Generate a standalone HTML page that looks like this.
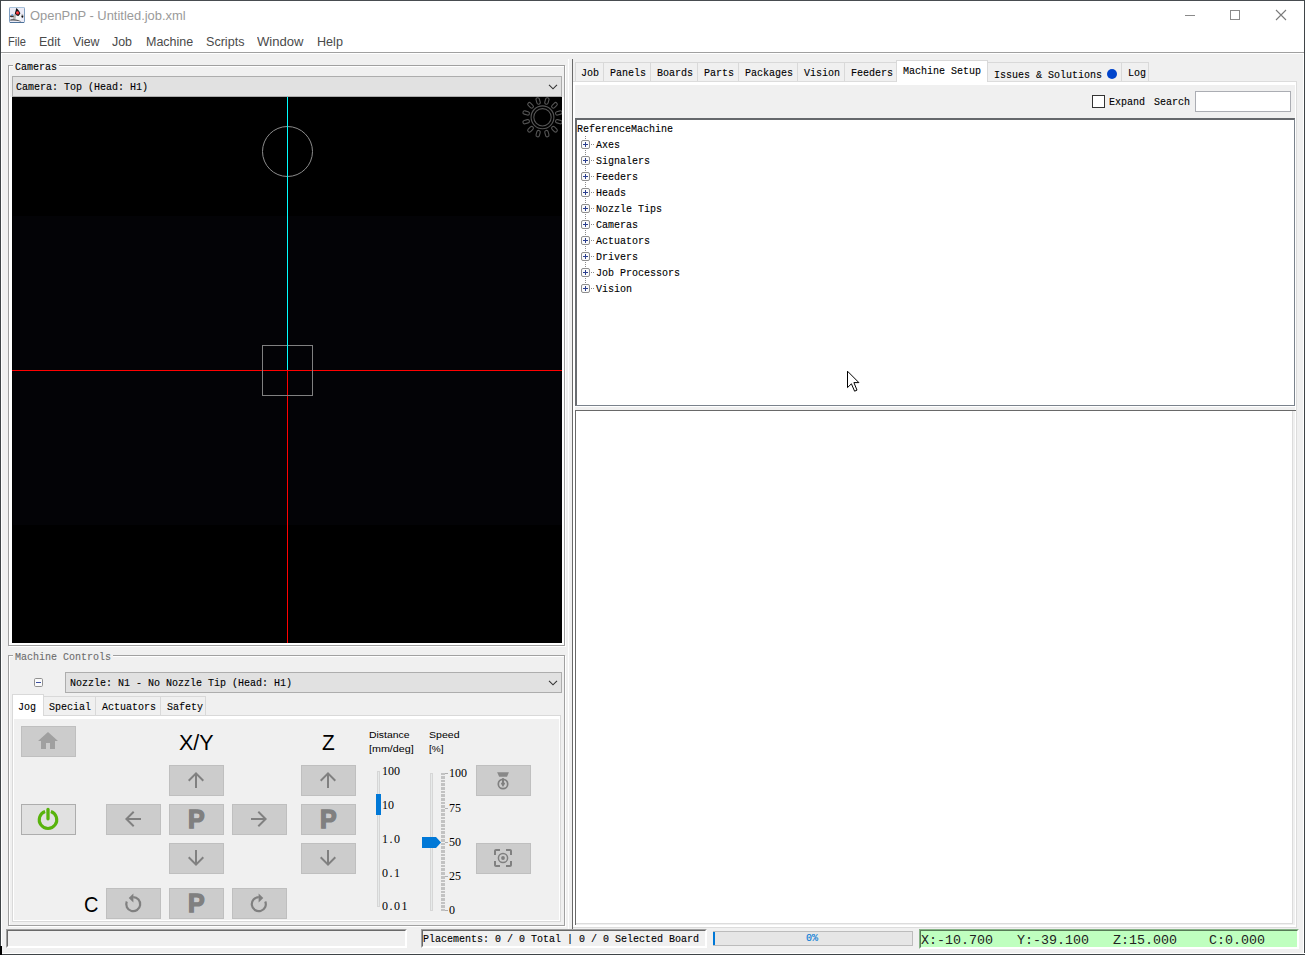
<!DOCTYPE html>
<html><head><meta charset="utf-8"><title>OpenPnP - Untitled.job.xml</title>
<style>
html,body{margin:0;padding:0;}
body{width:1305px;height:955px;overflow:hidden;background:#f0f0f0;position:relative;font-family:"Liberation Sans",sans-serif;}
#w{position:absolute;left:0;top:0;width:1305px;height:955px;overflow:hidden;background:#f0f0f0;}
#w div,#w span,#w svg{position:absolute;box-sizing:border-box;}
.m{font-family:"Liberation Mono",monospace;font-size:11px;line-height:12px;white-space:pre;transform:scaleX(0.9091);transform-origin:0 0;-webkit-text-stroke:0.12px;}
.n{font-family:"Liberation Serif",serif;font-size:12px;line-height:12px;white-space:pre;}
.s{font-family:"Liberation Sans",sans-serif;white-space:pre;}
.btn{background:#cccccc;border:1px solid #bfbfbf;}
.tab{border:1px solid #d9d9d9;background:#f0f0f0;}
.tabsel{border:1px solid #d9d9d9;border-bottom:none;background:#fff;}
.combo{background:#e1e1e1;border:1px solid #adadad;}
</style></head><body><div id="w">

<div style="left:0px;top:0px;width:1305px;height:1px;background:#474c50;"></div>
<div style="left:0px;top:1px;width:1305px;height:51px;background:#fff;"></div>
<div style="left:0px;top:52px;width:1305px;height:1px;background:#a0a0a0;"></div>
<div style="left:0px;top:53px;width:1305px;height:1px;background:#fff;"></div>
<div style="left:0px;top:0px;width:1px;height:955px;background:#3f4447;"></div>
<div style="left:1px;top:53px;width:1px;height:901px;background:#fff;"></div>
<div style="left:1303px;top:53px;width:1px;height:901px;background:#fff;"></div>
<div style="left:1304px;top:0px;width:1px;height:955px;background:#3f4447;"></div>
<div style="left:0px;top:953px;width:1305px;height:1px;background:#fff;"></div>
<div style="left:0px;top:954px;width:1305px;height:1px;background:#3f4447;"></div>
<div style="left:0px;top:946px;width:2px;height:9px;background:#000;"></div>
<svg style="left:9px;top:7px" width="16" height="16" viewBox="0 0 16 16">

<rect x="0.5" y="0.5" width="15" height="15" rx="0.8" fill="#ebebf6" stroke="#7e9ec0" stroke-width="1"/><path d="M1 0.5H15" stroke="#a9c3db" stroke-width="1"/><path d="M1 15.5H15" stroke="#4d7299" stroke-width="1"/>
<path d="M4.6 6.8C4.3 9 4 11 3.6 12.9L12.2 13.4C12 11 11.9 8.6 11.6 6.2L9.4 8.9Z" fill="#f6f6f6"/><path d="M4.6 6.8C4.3 9 4 11 3.6 12.9L6.5 13L7 8Z" fill="#b5b5b5"/>
<path d="M1.3 12.6C4 11.6 8 12.2 12.3 14.3L11.5 14.6C8 13.6 4.5 13.2 1.3 13.8Z" fill="#4a4a4a"/>
<path d="M7.3 1C8.8 2.4 10.4 4.2 11.4 6.2C10.9 7.3 10.3 8.2 9.4 9C8 8.8 6.7 7.8 5.8 6.4C6.5 4.4 7 2.6 7.3 1Z" fill="#10181a"/>
<circle cx="8.6" cy="5.9" r="1.7" fill="#ee2a32"/><circle cx="8.3" cy="5.3" r="0.8" fill="#ff5a5e"/>
<ellipse cx="2.9" cy="9.3" rx="2" ry="1" fill="#3f3428"/><circle cx="3.2" cy="7.9" r="0.9" fill="#5b9be0"/>
<ellipse cx="13.3" cy="8.2" rx="1" ry="1.3" fill="#b8b8bc"/><ellipse cx="13.4" cy="9.6" rx="0.9" ry="1.2" fill="#0c0c0c"/>
</svg>
<span class="s" style="left:30.30px;top:9.82px;font-size:12.5px;line-height:12.5px;color:#9a9a9a;transform:scaleX(1.0341);transform-origin:0 0;">OpenPnP - Untitled.job.xml</span>
<svg style="left:1180px;top:5px" width="120" height="20" viewBox="0 0 120 20">
<path d="M5 10.5H15" stroke="#8a8a8a" stroke-width="1" fill="none"/>
<rect x="50.5" y="5.5" width="9" height="9" stroke="#8a8a8a" stroke-width="1" fill="none"/>
<path d="M96 5L106 15M106 5L96 15" stroke="#7a7a7a" stroke-width="1.1" fill="none"/>
</svg>
<span class="s" style="left:7.60px;top:35.82px;font-size:12.5px;line-height:12.5px;color:#4a4a4a;transform:scaleX(0.8894);transform-origin:0 0;">File</span>
<span class="s" style="left:38.60px;top:35.82px;font-size:12.5px;line-height:12.5px;color:#4a4a4a;transform:scaleX(0.9925);transform-origin:0 0;">Edit</span>
<span class="s" style="left:73.10px;top:35.82px;font-size:12.5px;line-height:12.5px;color:#4a4a4a;transform:scaleX(0.9860);transform-origin:0 0;">View</span>
<span class="s" style="left:112.40px;top:35.82px;font-size:12.5px;line-height:12.5px;color:#4a4a4a;transform:scaleX(0.9938);transform-origin:0 0;">Job</span>
<span class="s" style="left:146.20px;top:35.82px;font-size:12.5px;line-height:12.5px;color:#4a4a4a;transform:scaleX(0.9989);transform-origin:0 0;">Machine</span>
<span class="s" style="left:206.10px;top:35.82px;font-size:12.5px;line-height:12.5px;color:#4a4a4a;transform:scaleX(1.0056);transform-origin:0 0;">Scripts</span>
<span class="s" style="left:257.20px;top:35.82px;font-size:12.5px;line-height:12.5px;color:#4a4a4a;transform:scaleX(1.0472);transform-origin:0 0;">Window</span>
<span class="s" style="left:316.50px;top:35.82px;font-size:12.5px;line-height:12.5px;color:#4a4a4a;transform:scaleX(1.0083);transform-origin:0 0;">Help</span>
<div style="left:9px;top:66px;width:557px;height:581px;border:1px solid #fff;"></div>
<div style="left:8px;top:65px;width:557px;height:581px;border:1px solid #a0a0a0;"></div>
<div style="left:13px;top:60px;width:46px;height:12px;background:#f0f0f0;"></div>
<span class="m" style="left:15px;top:61px;color:#000;">Cameras</span>
<div class="combo" style="left:12px;top:76px;width:550px;height:21px;"></div>
<span class="m" style="left:16px;top:81px;color:#000;">Camera: Top (Head: H1)</span>
<svg style="left:548px;top:84px" width="10" height="6" viewBox="0 0 10 6"><path d="M1 0.8L5 4.8L9 0.8" stroke="#333" stroke-width="1.1" fill="none"/></svg>
<div style="left:10px;top:97px;width:554px;height:548px;background:#fff;"></div>
<div style="left:12px;top:97px;width:550px;height:546px;background:#000;"></div>
<div style="left:13px;top:216px;width:549px;height:309px;background:#030306;"></div>
<div style="left:287px;top:97px;width:1px;height:273px;background:#00ffff;"></div>
<div style="left:287px;top:370px;width:1px;height:273px;background:#ff0000;"></div>
<div style="left:12px;top:370px;width:550px;height:1px;background:#ff0000;"></div>
<div style="left:262px;top:345px;width:51px;height:51px;border:1px solid #808080;"></div>
<div style="left:287px;top:345px;width:1px;height:25px;background:#00ffff;"></div>
<div style="left:262px;top:126px;width:51px;height:51px;border:1px solid #8c8c8c;border-radius:50%;"></div>
<div style="left:287px;top:126px;width:1px;height:51px;background:#00ffff;"></div>
<svg style="left:518px;top:97px" width="44" height="44" viewBox="-24.5 -20.3 44 44" overflow="hidden"><g fill="none" stroke="#555" stroke-width="1.1"><circle r="11.4"/><circle r="8.7"/><rect x="-1.7" y="-20.2" width="3.4" height="6.6" rx="1.7" transform="rotate(15)" /><rect x="-1.7" y="-20.2" width="3.4" height="6.6" rx="1.7" transform="rotate(45)" /><rect x="-1.7" y="-20.2" width="3.4" height="6.6" rx="1.7" transform="rotate(75)" /><rect x="-1.7" y="-20.2" width="3.4" height="6.6" rx="1.7" transform="rotate(105)" /><rect x="-1.7" y="-20.2" width="3.4" height="6.6" rx="1.7" transform="rotate(135)" /><rect x="-1.7" y="-20.2" width="3.4" height="6.6" rx="1.7" transform="rotate(165)" /><rect x="-1.7" y="-20.2" width="3.4" height="6.6" rx="1.7" transform="rotate(195)" /><rect x="-1.7" y="-20.2" width="3.4" height="6.6" rx="1.7" transform="rotate(225)" /><rect x="-1.7" y="-20.2" width="3.4" height="6.6" rx="1.7" transform="rotate(255)" /><rect x="-1.7" y="-20.2" width="3.4" height="6.6" rx="1.7" transform="rotate(285)" /><rect x="-1.7" y="-20.2" width="3.4" height="6.6" rx="1.7" transform="rotate(315)" /><rect x="-1.7" y="-20.2" width="3.4" height="6.6" rx="1.7" transform="rotate(345)" /></g></svg>
<div style="left:9px;top:656px;width:557px;height:271px;border:1px solid #fff;"></div>
<div style="left:8px;top:655px;width:557px;height:271px;border:1px solid #a0a0a0;"></div>
<div style="left:13px;top:650px;width:100px;height:12px;background:#f0f0f0;"></div>
<span class="m" style="left:15px;top:651px;color:#6d6d6d;">Machine Controls</span>
<svg style="left:34px;top:678px" width="9" height="9" viewBox="0 0 9 9"><rect x="0.5" y="0.5" width="8" height="8" rx="1.2" fill="#fbfbfb" stroke="#919191"/><path d="M2 4.5H7" stroke="#3c50a0" stroke-width="1"/></svg>
<div class="combo" style="left:65px;top:672px;width:497px;height:21px;"></div>
<span class="m" style="left:70px;top:677px;color:#000;">Nozzle: N1 - No Nozzle Tip (Head: H1)</span>
<svg style="left:548px;top:680px" width="10" height="6" viewBox="0 0 10 6"><path d="M1 0.8L5 4.8L9 0.8" stroke="#333" stroke-width="1.1" fill="none"/></svg>
<div class="tab" style="left:43px;top:696px;width:53px;height:20px;"></div>
<span class="m" style="left:49px;top:701px;color:#000;">Special</span>
<div class="tab" style="left:95px;top:696px;width:66px;height:20px;"></div>
<span class="m" style="left:102px;top:701px;color:#000;">Actuators</span>
<div class="tab" style="left:160px;top:696px;width:46px;height:20px;"></div>
<span class="m" style="left:167px;top:701px;color:#000;">Safety</span>
<div style="left:12px;top:716px;width:549px;height:206px;border:1px solid #d9d9d9;border-top:none;"></div>
<div style="left:13px;top:716px;width:547px;height:205px;border:1px solid #fff;border-top:3px solid #fff;"></div>
<div style="left:12px;top:715px;width:549px;height:1px;background:#d9d9d9;"></div>
<div class="tabsel" style="left:12px;top:694px;width:32px;height:22px;"></div>
<span class="m" style="left:18px;top:701px;color:#000;">Jog</span>
<div class="btn" style="left:21px;top:726px;width:55px;height:31px;"></div>
<div style="left:21px;top:804px;width:55px;height:31px;background:#e1e1e1;border:1px solid #adadad;"></div>
<div class="btn" style="left:169px;top:765px;width:55px;height:31px;"></div>
<div class="btn" style="left:106px;top:804px;width:55px;height:31px;"></div>
<div class="btn" style="left:169px;top:804px;width:55px;height:31px;"></div>
<span class="s" style="left:187.50px;top:806.39px;font-size:26px;line-height:26px;color:#808080;font-weight:bold;transform:scaleX(0.9601);transform-origin:0 0;-webkit-text-stroke:1.4px #808080;">P</span>
<div class="btn" style="left:232px;top:804px;width:55px;height:31px;"></div>
<div class="btn" style="left:169px;top:843px;width:55px;height:31px;"></div>
<div class="btn" style="left:106px;top:888px;width:55px;height:31px;"></div>
<div class="btn" style="left:169px;top:888px;width:55px;height:31px;"></div>
<span class="s" style="left:187.50px;top:890.39px;font-size:26px;line-height:26px;color:#808080;font-weight:bold;transform:scaleX(0.9601);transform-origin:0 0;-webkit-text-stroke:1.4px #808080;">P</span>
<div class="btn" style="left:232px;top:888px;width:55px;height:31px;"></div>
<div class="btn" style="left:301px;top:765px;width:55px;height:31px;"></div>
<div class="btn" style="left:301px;top:804px;width:55px;height:31px;"></div>
<span class="s" style="left:319.50px;top:806.39px;font-size:26px;line-height:26px;color:#808080;font-weight:bold;transform:scaleX(0.9601);transform-origin:0 0;-webkit-text-stroke:1.4px #808080;">P</span>
<div class="btn" style="left:301px;top:843px;width:55px;height:31px;"></div>
<div class="btn" style="left:476px;top:765px;width:55px;height:31px;"></div>
<div class="btn" style="left:476px;top:843px;width:55px;height:31px;"></div>
<span class="s" style="left:179.00px;top:732.38px;font-size:22px;line-height:22px;color:#000;transform:scaleX(0.9768);transform-origin:0 0;">X/Y</span>
<span class="s" style="left:322.20px;top:732.38px;font-size:22px;line-height:22px;color:#000;transform:scaleX(0.9463);transform-origin:0 0;">Z</span>
<span class="s" style="left:83.80px;top:894.18px;font-size:22px;line-height:22px;color:#000;transform:scaleX(0.9091);transform-origin:0 0;">C</span>
<span class="s" style="left:369.40px;top:729.87px;font-size:9.6px;line-height:9.6px;color:#000;transform:scaleX(1.0845);transform-origin:0 0;">Distance</span>
<span class="s" style="left:369.20px;top:743.87px;font-size:9.6px;line-height:9.6px;color:#000;transform:scaleX(1.1166);transform-origin:0 0;">[mm/deg]</span>
<span class="s" style="left:429.30px;top:729.87px;font-size:9.6px;line-height:9.6px;color:#000;transform:scaleX(1.0993);transform-origin:0 0;">Speed</span>
<span class="s" style="left:429.30px;top:743.87px;font-size:9.6px;line-height:9.6px;color:#000;transform:scaleX(1.0453);transform-origin:0 0;">[%]</span>
<div style="left:377px;top:771px;width:3px;height:136px;background:#e7eaea;border:1px solid #d6d6d6;"></div>
<div style="left:376px;top:794px;width:5px;height:21px;background:#0078d7;"></div>
<span class="n" style="left:382px;top:765px;color:#000;letter-spacing:0px;">100</span>
<span class="n" style="left:382px;top:799px;color:#000;letter-spacing:0px;">10</span>
<span class="n" style="left:382px;top:833px;color:#000;letter-spacing:1.5px;">1.0</span>
<span class="n" style="left:382px;top:867px;color:#000;letter-spacing:1.5px;">0.1</span>
<span class="n" style="left:382px;top:900px;color:#000;letter-spacing:1.5px;">0.01</span>
<div style="left:430px;top:773px;width:3px;height:138px;background:#e7eaea;border:1px solid #d6d6d6;"></div>
<span class="n" style="left:449px;top:767px;color:#000;letter-spacing:0px;">100</span>
<span class="n" style="left:449px;top:802px;color:#000;letter-spacing:0px;">75</span>
<span class="n" style="left:449px;top:836px;color:#000;letter-spacing:0px;">50</span>
<span class="n" style="left:449px;top:870px;color:#000;letter-spacing:0px;">25</span>
<span class="n" style="left:449px;top:904px;color:#000;letter-spacing:0px;">0</span>
<div style="left:568px;top:59px;width:1px;height:870px;background:#fff;"></div>
<div style="left:572px;top:59px;width:1px;height:870px;background:#696969;"></div>
<div style="left:573px;top:82px;width:2px;height:845px;background:#fff;"></div>
<div class="tab" style="left:575px;top:62px;width:29px;height:20px;"></div>
<span class="m" style="left:580.5px;top:67px;color:#000;">Job</span>
<div class="tab" style="left:603px;top:62px;width:48px;height:20px;"></div>
<span class="m" style="left:609.5px;top:67px;color:#000;">Panels</span>
<div class="tab" style="left:650px;top:62px;width:48px;height:20px;"></div>
<span class="m" style="left:656.5px;top:67px;color:#000;">Boards</span>
<div class="tab" style="left:697px;top:62px;width:42px;height:20px;"></div>
<span class="m" style="left:703.5px;top:67px;color:#000;">Parts</span>
<div class="tab" style="left:738px;top:62px;width:60px;height:20px;"></div>
<span class="m" style="left:744.5px;top:67px;color:#000;">Packages</span>
<div class="tab" style="left:797px;top:62px;width:48px;height:20px;"></div>
<span class="m" style="left:803.5px;top:67px;color:#000;">Vision</span>
<div class="tab" style="left:844px;top:62px;width:53px;height:20px;"></div>
<span class="m" style="left:850.5px;top:67px;color:#000;">Feeders</span>
<div class="tab" style="left:987px;top:62px;width:135px;height:20px;"></div>
<span class="m" style="left:994px;top:69px;color:#000;">Issues &amp; Solutions</span>
<div style="left:1107px;top:69px;width:10px;height:10px;background:#0044cc;border-radius:50%;"></div>
<div class="tab" style="left:1121px;top:62px;width:28px;height:20px;"></div>
<span class="m" style="left:1128px;top:67px;color:#000;">Log</span>
<div style="left:573px;top:81px;width:724px;height:1px;background:#dcdcdc;"></div>
<div style="left:1296px;top:81px;width:1px;height:847px;background:#dcdcdc;"></div>
<div style="left:573px;top:927px;width:724px;height:1px;background:#dcdcdc;"></div>
<div style="left:573px;top:82px;width:723px;height:3px;background:#fff;"></div>
<div style="left:1295px;top:82px;width:1px;height:845px;background:#fff;"></div>
<div style="left:573px;top:925px;width:723px;height:2px;background:#fff;"></div>
<div class="tabsel" style="left:896px;top:60px;width:92px;height:22px;"></div>
<span class="m" style="left:903px;top:65px;color:#000;">Machine Setup</span>
<div style="left:1092px;top:95px;width:13px;height:13px;background:#fff;border:1px solid #333;"></div>
<span class="m" style="left:1109px;top:96px;color:#000;">Expand</span>
<span class="m" style="left:1154px;top:96px;color:#000;">Search</span>
<div style="left:1195px;top:91px;width:96px;height:21px;background:#fff;border:1px solid #abadb3;"></div>
<div style="left:575px;top:118px;width:720px;height:288px;background:#fff;border-right:1px solid #7a828c;border-bottom:1px solid #7a828c;border-top:2px solid #65686c;border-left:2px solid #696c70;"></div>
<div style="left:575px;top:406px;width:721px;height:1px;background:#fff;"></div>
<span class="m" style="left:577px;top:123px;color:#000;">ReferenceMachine</span>
<span class="m" style="left:596px;top:139px;color:#000;">Axes</span>
<span class="m" style="left:596px;top:155px;color:#000;">Signalers</span>
<span class="m" style="left:596px;top:171px;color:#000;">Feeders</span>
<span class="m" style="left:596px;top:187px;color:#000;">Heads</span>
<span class="m" style="left:596px;top:203px;color:#000;">Nozzle Tips</span>
<span class="m" style="left:596px;top:219px;color:#000;">Cameras</span>
<span class="m" style="left:596px;top:235px;color:#000;">Actuators</span>
<span class="m" style="left:596px;top:251px;color:#000;">Drivers</span>
<span class="m" style="left:596px;top:267px;color:#000;">Job Processors</span>
<span class="m" style="left:596px;top:283px;color:#000;">Vision</span>
<svg style="left:0;top:0" width="1305" height="955" viewBox="0 0 1305 955" shape-rendering="crispEdges"><path d="M585.5 136V284" stroke="#8c8c8c" stroke-width="1" stroke-dasharray="1 1" fill="none"/><path d="M591 144.5h1m1 0h1" stroke="#8c8c8c" stroke-width="1" fill="none"/><rect x="581.5" y="140.5" width="8" height="8" rx="1.5" fill="#fafafa" stroke="#8e8e8e" shape-rendering="geometricPrecision"/><path d="M583 144.5H588M585.5 142V147" stroke="#2b3f8f" stroke-width="1" fill="none"/><path d="M591 160.5h1m1 0h1" stroke="#8c8c8c" stroke-width="1" fill="none"/><rect x="581.5" y="156.5" width="8" height="8" rx="1.5" fill="#fafafa" stroke="#8e8e8e" shape-rendering="geometricPrecision"/><path d="M583 160.5H588M585.5 158V163" stroke="#2b3f8f" stroke-width="1" fill="none"/><path d="M591 176.5h1m1 0h1" stroke="#8c8c8c" stroke-width="1" fill="none"/><rect x="581.5" y="172.5" width="8" height="8" rx="1.5" fill="#fafafa" stroke="#8e8e8e" shape-rendering="geometricPrecision"/><path d="M583 176.5H588M585.5 174V179" stroke="#2b3f8f" stroke-width="1" fill="none"/><path d="M591 192.5h1m1 0h1" stroke="#8c8c8c" stroke-width="1" fill="none"/><rect x="581.5" y="188.5" width="8" height="8" rx="1.5" fill="#fafafa" stroke="#8e8e8e" shape-rendering="geometricPrecision"/><path d="M583 192.5H588M585.5 190V195" stroke="#2b3f8f" stroke-width="1" fill="none"/><path d="M591 208.5h1m1 0h1" stroke="#8c8c8c" stroke-width="1" fill="none"/><rect x="581.5" y="204.5" width="8" height="8" rx="1.5" fill="#fafafa" stroke="#8e8e8e" shape-rendering="geometricPrecision"/><path d="M583 208.5H588M585.5 206V211" stroke="#2b3f8f" stroke-width="1" fill="none"/><path d="M591 224.5h1m1 0h1" stroke="#8c8c8c" stroke-width="1" fill="none"/><rect x="581.5" y="220.5" width="8" height="8" rx="1.5" fill="#fafafa" stroke="#8e8e8e" shape-rendering="geometricPrecision"/><path d="M583 224.5H588M585.5 222V227" stroke="#2b3f8f" stroke-width="1" fill="none"/><path d="M591 240.5h1m1 0h1" stroke="#8c8c8c" stroke-width="1" fill="none"/><rect x="581.5" y="236.5" width="8" height="8" rx="1.5" fill="#fafafa" stroke="#8e8e8e" shape-rendering="geometricPrecision"/><path d="M583 240.5H588M585.5 238V243" stroke="#2b3f8f" stroke-width="1" fill="none"/><path d="M591 256.5h1m1 0h1" stroke="#8c8c8c" stroke-width="1" fill="none"/><rect x="581.5" y="252.5" width="8" height="8" rx="1.5" fill="#fafafa" stroke="#8e8e8e" shape-rendering="geometricPrecision"/><path d="M583 256.5H588M585.5 254V259" stroke="#2b3f8f" stroke-width="1" fill="none"/><path d="M591 272.5h1m1 0h1" stroke="#8c8c8c" stroke-width="1" fill="none"/><rect x="581.5" y="268.5" width="8" height="8" rx="1.5" fill="#fafafa" stroke="#8e8e8e" shape-rendering="geometricPrecision"/><path d="M583 272.5H588M585.5 270V275" stroke="#2b3f8f" stroke-width="1" fill="none"/><path d="M591 288.5h1m1 0h1" stroke="#8c8c8c" stroke-width="1" fill="none"/><rect x="581.5" y="284.5" width="8" height="8" rx="1.5" fill="#fafafa" stroke="#8e8e8e" shape-rendering="geometricPrecision"/><path d="M583 288.5H588M585.5 286V291" stroke="#2b3f8f" stroke-width="1" fill="none"/></svg>
<div style="left:575px;top:410px;width:721px;height:1px;background:#696969;"></div>
<div style="left:575px;top:410px;width:1px;height:515px;background:#696969;"></div>
<div style="left:576px;top:411px;width:716px;height:512px;background:#fff;"></div>
<div style="left:1292px;top:411px;width:1px;height:513px;background:#dcdcdc;"></div>
<div style="left:576px;top:923px;width:717px;height:1px;background:#dcdcdc;"></div>
<svg style="left:0;top:0;pointer-events:none" width="1305" height="955" viewBox="0 0 1305 955"><path transform="translate(36,729)" d="M10 20v-6h4v6h5v-8h3L12 3 2 12h3v8z" fill="#a0a0a0"/><path d="M45.1 811.45A8.75 8.75 0 1 0 50.9 811.45" fill="none" stroke="#58b30c" stroke-width="3.1"/><path d="M48 809.4V818.8" fill="none" stroke="#58b30c" stroke-width="3.3" stroke-linecap="round"/><path transform="translate(184,768)" d="M4 12l1.41 1.41L11 7.83V20h2V7.83l5.58 5.59L20 12l-8-8-8 8z" fill="#808080"/><path transform="translate(121,807)" d="M20 11H7.83l5.59-5.59L12 4l-8 8 8 8 1.41-1.41L7.83 13H20v-2z" fill="#808080"/><path transform="translate(247,807)" d="M12 4l-1.41 1.41L16.17 11H4v2h12.17l-5.58 5.59L12 20l8-8z" fill="#808080"/><path transform="translate(184,846)" d="M20 12l-1.41-1.41L13 16.17V4h-2v12.17l-5.58-5.59L4 12l8 8 8-8z" fill="#808080"/><path d="M133.20 897.20A7.0 7.0 0 1 1 126.76 901.46" fill="none" stroke="#808080" stroke-width="2.2"/><path d="M133.40 893.50L128.70 898.00L133.40 902.40Z" fill="#808080"/><path d="M258.80 897.20A7.0 7.0 0 1 0 265.24 901.46" fill="none" stroke="#808080" stroke-width="2.2"/><path d="M258.60 893.50L263.30 898.00L258.60 902.40Z" fill="#808080"/><path transform="translate(316,768)" d="M4 12l1.41 1.41L11 7.83V20h2V7.83l5.58 5.59L20 12l-8-8-8 8z" fill="#808080"/><path transform="translate(316,846)" d="M20 12l-1.41-1.41L13 16.17V4h-2v12.17l-5.58-5.59L4 12l8 8 8-8z" fill="#808080"/><path d="M497.1 772.2H508.9L507 776.7H499.2Z" fill="#888"/><circle cx="503" cy="784" r="4.7" fill="none" stroke="#808080" stroke-width="1.7"/><path d="M503 778.3V783" stroke="#808080" stroke-width="2" fill="none"/><path d="M500.9 783.5L503 781L505.1 783.5L503 787Z" fill="#808080"/><path transform="translate(491,846)" d="M5 15H3v4c0 1.1.9 2 2 2h4v-2H5v-4zM5 5h4V3H5c-1.1 0-2 .9-2 2v4h2V5zm14-2h-4v2h4v4h2V5c0-1.1-.9-2-2-2zm0 16h-4v2h4c1.1 0 2-.9 2-2v-4h-2v4z" fill="#808080"/><circle cx="503" cy="858" r="4.6" fill="none" stroke="#808080" stroke-width="1.5"/><circle cx="503" cy="858" r="1.9" fill="#808080"/><path d="M422 837H436L441 842.5L436 848H422Z" fill="#0078d7"/><path d="M441 773.5H445M441 774.5H445M441 776.5H445M441 777.5H445M441 778.5H445M441 780.5H445M441 781.5H445M441 783.5H445M441 784.5H445M441 785.5H445M441 787.5H445M441 788.5H445M441 789.5H445M441 791.5H445M441 792.5H445M441 794.5H445M441 795.5H445M441 796.5H445M441 798.5H445M441 799.5H445M441 800.5H445M441 802.5H445M441 803.5H445M441 805.5H445M441 806.5H445M441 807.5H445M441 809.5H445M441 810.5H445M441 811.5H445M441 813.5H445M441 814.5H445M441 815.5H445M441 817.5H445M441 818.5H445M441 820.5H445M441 821.5H445M441 822.5H445M441 824.5H445M441 825.5H445M441 826.5H445M441 828.5H445M441 829.5H445M441 831.5H445M441 832.5H445M441 833.5H445M441 835.5H445M441 836.5H445M441 837.5H445M441 839.5H445M441 840.5H445M441 841.5H445M441 843.5H445M441 844.5H445M441 846.5H445M441 847.5H445M441 848.5H445M441 850.5H445M441 851.5H445M441 852.5H445M441 854.5H445M441 855.5H445M441 857.5H445M441 858.5H445M441 859.5H445M441 861.5H445M441 862.5H445M441 863.5H445M441 865.5H445M441 866.5H445M441 868.5H445M441 869.5H445M441 870.5H445M441 872.5H445M441 873.5H445M441 874.5H445M441 876.5H445M441 877.5H445M441 878.5H445M441 880.5H445M441 881.5H445M441 883.5H445M441 884.5H445M441 885.5H445M441 887.5H445M441 888.5H445M441 889.5H445M441 891.5H445M441 892.5H445M441 894.5H445M441 895.5H445M441 896.5H445M441 898.5H445M441 899.5H445M441 900.5H445M441 902.5H445M441 903.5H445M441 905.5H445M441 906.5H445M441 907.5H445M441 909.5H445M441 910.5H445" stroke="#c2c2c2" stroke-width="1" fill="none"/><path d="M445 773.5H448M445 808.5H448M445 842.5H448M445 876.5H448M445 910.5H448" stroke="#b0b0b0" stroke-width="1" fill="none"/></svg>
<svg style="left:846px;top:370px" width="14" height="23" viewBox="0 0 14 23"><path d="M1.5 1.2V17.6L5.4 13.8L8.6 21.2L11 20.1L7.9 12.6H12.9Z" fill="#fff" stroke="#000" stroke-width="1"/></svg>
<div style="left:6px;top:929px;width:401px;height:19px;background:#f0f0f0;border-top:1px solid #a0a0a0;border-left:1px solid #a0a0a0;border-bottom:1px solid #fff;border-right:1px solid #fff;"></div>
<div style="left:7px;top:930px;width:399px;height:17px;border-top:1px solid #696969;border-left:1px solid #696969;border-bottom:1px solid #fff;border-right:1px solid #fff;"></div>
<div style="left:421px;top:929px;width:286px;height:19px;background:#f0f0f0;border-top:1px solid #a0a0a0;border-left:1px solid #a0a0a0;border-bottom:1px solid #fff;border-right:1px solid #fff;"></div>
<div style="left:422px;top:930px;width:284px;height:17px;border-top:1px solid #696969;border-left:1px solid #696969;border-bottom:1px solid #fff;border-right:1px solid #fff;"></div>
<span class="m" style="left:423px;top:933px;color:#000;">Placements: 0 / 0 Total | 0 / 0 Selected Board</span>
<div style="left:713px;top:931px;width:200px;height:15px;background:#e6e6e6;border:1px solid #bcbcbc;"></div>
<div style="left:713px;top:932px;width:2px;height:13px;background:#0078d7;"></div>
<span class="m" style="left:806.3px;top:932px;color:#0078d7;">0%</span>
<div style="left:919px;top:929px;width:380px;height:20px;background:#bfffbf;border-top:1px solid #86b386;border-left:1px solid #86b386;border-bottom:1px solid #fff;border-right:1px solid #fff;"></div>
<div style="left:920px;top:930px;width:378px;height:18px;border-top:1px solid #567a56;border-left:1px solid #567a56;border-bottom:1px solid #fff;border-right:1px solid #fff;"></div>
<span style="left:921px;top:934px;font-family:'Liberation Mono',monospace;font-size:12.5px;line-height:14px;white-space:pre;color:#222;transform:scaleX(1.0667);transform-origin:0 0;">X:-10.700   Y:-39.100   Z:15.000    C:0.000</span>
</div></body></html>
